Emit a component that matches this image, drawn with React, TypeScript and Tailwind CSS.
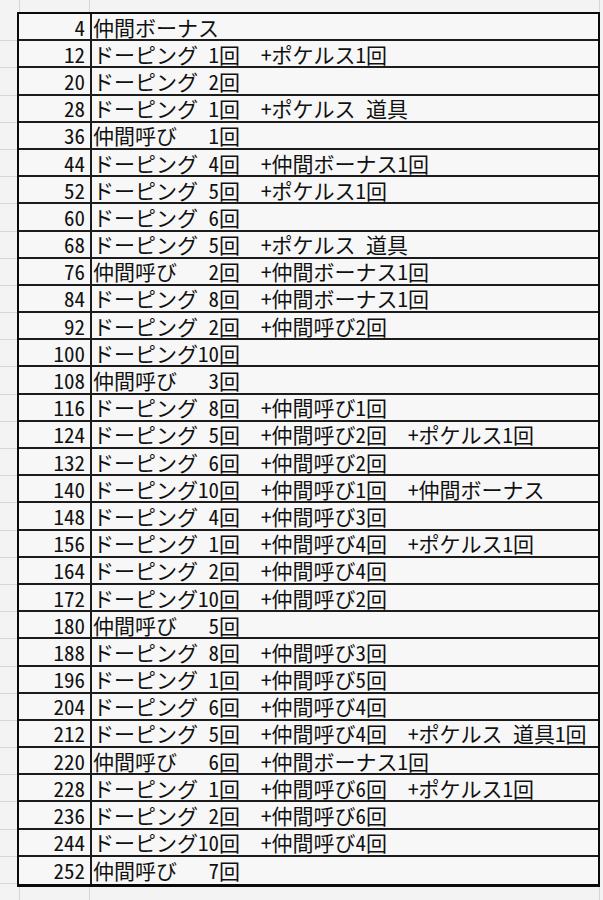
// Spreadsheet capture: level → bonus schedule, two columns inside a heavy frame.
const SP = "\u2002"; // half-width space, same advance as a digit

type Row = [number, string, number | null, string[]];

const ROWS: Row[] = [
  [4, "仲間ボーナス", null, []],
  [12, "ドーピング", 1, ["+ポケルス1回"]],
  [20, "ドーピング", 2, []],
  [28, "ドーピング", 1, [`+ポケルス${SP}道具`]],
  [36, "仲間呼び", 1, []],
  [44, "ドーピング", 4, ["+仲間ボーナス1回"]],
  [52, "ドーピング", 5, ["+ポケルス1回"]],
  [60, "ドーピング", 6, []],
  [68, "ドーピング", 5, [`+ポケルス${SP}道具`]],
  [76, "仲間呼び", 2, ["+仲間ボーナス1回"]],
  [84, "ドーピング", 8, ["+仲間ボーナス1回"]],
  [92, "ドーピング", 2, ["+仲間呼び2回"]],
  [100, "ドーピング", 10, []],
  [108, "仲間呼び", 3, []],
  [116, "ドーピング", 8, ["+仲間呼び1回"]],
  [124, "ドーピング", 5, ["+仲間呼び2回", "+ポケルス1回"]],
  [132, "ドーピング", 6, ["+仲間呼び2回"]],
  [140, "ドーピング", 10, ["+仲間呼び1回", "+仲間ボーナス"]],
  [148, "ドーピング", 4, ["+仲間呼び3回"]],
  [156, "ドーピング", 1, ["+仲間呼び4回", "+ポケルス1回"]],
  [164, "ドーピング", 2, ["+仲間呼び4回"]],
  [172, "ドーピング", 10, ["+仲間呼び2回"]],
  [180, "仲間呼び", 5, []],
  [188, "ドーピング", 8, ["+仲間呼び3回"]],
  [196, "ドーピング", 1, ["+仲間呼び5回"]],
  [204, "ドーピング", 6, ["+仲間呼び4回"]],
  [212, "ドーピング", 5, ["+仲間呼び4回", `+ポケルス${SP}道具1回`]],
  [220, "仲間呼び", 6, ["+仲間ボーナス1回"]],
  [228, "ドーピング", 1, ["+仲間呼び6回", "+ポケルス1回"]],
  [236, "ドーピング", 2, ["+仲間呼び6回"]],
  [244, "ドーピング", 10, ["+仲間呼び4回"]],
  [252, "仲間呼び", 7, []],
];

// name padded to 10 half-width units, count right-aligned in 2, then 回
function cellText([, name, count, extras]: Row) {
  if (count === null) return name;
  const pad = SP.repeat(name === "ドーピング" ? 0 : 2);
  const cnt = String(count).padStart(2, SP);
  return name + pad + cnt + "回" + extras.map((e) => SP + SP + e).join("");
}

const FONT = "font-['Noto_Sans_CJK_JP','Noto_Sans_CJK_SC',sans-serif] [font-feature-settings:'hwid']";

export default function App() {
  return (
    <div className={`h-[900px] w-[603px] overflow-hidden bg-[#f3f3f3] text-[#111] ${FONT}`}>
      {/* sheet header strip, only faint column edges show */}
      <div className="flex h-[12px]">
        <div className="w-[20px] border-r border-[#d6d6d6]" />
        <div className="w-[70px] border-r border-[#d6d6d6]" />
        <div className="w-[510px] border-r border-[#d6d6d6]" />
      </div>

      <div className="flex">
        {/* row lines of the sheet, left of the frame */}
        <div className="flex w-[17px] flex-col pt-[2px]">
          {ROWS.map((r) => (
            <div key={r[0]} className="h-[27.2px] border-b border-[#d6d6d6]" />
          ))}
        </div>

        <div className="w-[583px] border-2 border-b-[3px] border-[#0a0a0a] bg-[#f7f7f7]">
          {ROWS.map((r) => (
            <div
              key={r[0]}
              className="flex h-[27.2px] border-b-2 border-[#1c1c1c] last:border-b-0"
            >
              <div className="flex w-[73px] shrink-0 items-center justify-end border-r-2 border-[#1c1c1c] pr-[5px] pt-[1px] text-[21px] leading-none">
                {r[0]}
              </div>
              <div className="flex items-center whitespace-pre pl-[1px] pt-[1px] text-[21px] leading-none">
                {cellText(r)}
              </div>
            </div>
          ))}
        </div>
      </div>

      {/* below the frame */}
      <div className="flex h-[14px]">
        <div className="w-[20px] border-r border-[#d6d6d6]" />
        <div className="w-[70px] border-r border-[#d6d6d6]" />
        <div className="w-[510px] border-r border-[#d6d6d6]" />
      </div>
    </div>
  );
}
